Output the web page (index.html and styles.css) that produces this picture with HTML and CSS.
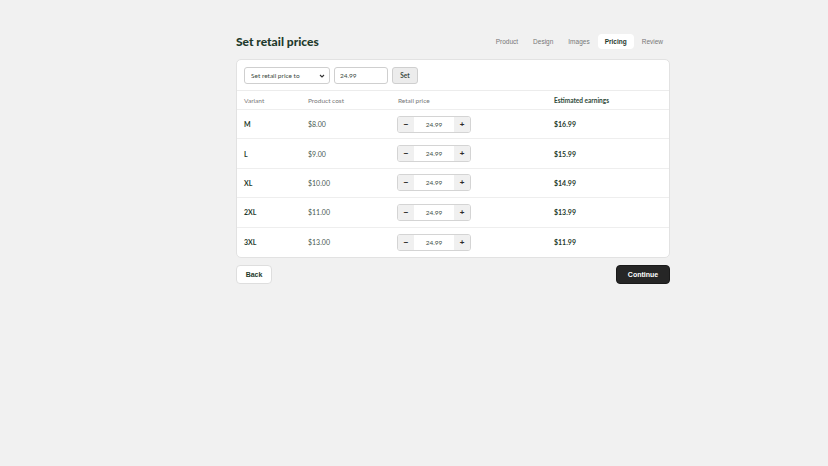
FILE: index.html
```html
<!DOCTYPE html>
<html lang="en">
<head>
  <meta charset="UTF-8">
  <title>Set retail prices</title>
  <link rel="stylesheet" href="styles.css">
</head>
<body>
  <main class="page">
    <header class="top">
      <h1>Set retail prices</h1>
      <nav class="steps">
        <span class="step">Product</span>
        <span class="step">Design</span>
        <span class="step">Images</span>
        <span class="step active">Pricing</span>
        <span class="step">Review</span>
      </nav>
    </header>

    <section class="card">
      <div class="toolbar">
        <div class="select-wrap">
          <select class="bulk">
            <option>Set retail price to</option>
          </select>
          <svg class="chevron" width="6" height="4" viewBox="0 0 6 4"><path d="M1 1l2 2 2-2" fill="none" stroke="#333" stroke-width="1.1"/></svg>
        </div>
        <input class="bulk-value" type="text" value="24.99">
        <button class="btn-set">Set</button>
      </div>

      <div class="row head">
        <div>Variant</div>
        <div>Product cost</div>
        <div>Retail price</div>
        <div>Estimated earnings</div>
      </div>

      <div class="row">
        <div class="variant">M</div>
        <div>$8.00</div>
        <div><div class="stepper"><button>&minus;</button><input type="text" value="24.99"><button>+</button></div></div>
        <div class="earn">$16.99</div>
      </div>
      <div class="row">
        <div class="variant">L</div>
        <div>$9.00</div>
        <div><div class="stepper"><button>&minus;</button><input type="text" value="24.99"><button>+</button></div></div>
        <div class="earn">$15.99</div>
      </div>
      <div class="row">
        <div class="variant">XL</div>
        <div>$10.00</div>
        <div><div class="stepper"><button>&minus;</button><input type="text" value="24.99"><button>+</button></div></div>
        <div class="earn">$14.99</div>
      </div>
      <div class="row">
        <div class="variant">2XL</div>
        <div>$11.00</div>
        <div><div class="stepper"><button>&minus;</button><input type="text" value="24.99"><button>+</button></div></div>
        <div class="earn">$13.99</div>
      </div>
      <div class="row">
        <div class="variant">3XL</div>
        <div>$13.00</div>
        <div><div class="stepper"><button>&minus;</button><input type="text" value="24.99"><button>+</button></div></div>
        <div class="earn">$11.99</div>
      </div>
    </section>

    <footer class="actions">
      <button class="btn-back">Back</button>
      <button class="btn-next">Continue</button>
    </footer>
  </main>
</body>
</html>
```

FILE: styles.css
```css
body {
  margin: 0;
  background: #f1f1f1;
  font-family: "Lato", "Liberation Sans", sans-serif;
  color: #1f3a2c;
}

.page {
  width: 434px;
  margin-left: 236px;
  padding-top: 34px;
}

.top {
  display: flex;
  justify-content: space-between;
  align-items: center;
  margin-bottom: 10px;
}

h1 {
  margin: 0;
  font-size: 12px;
  font-weight: 900;
  color: #1f3a2c;
}

.steps {
  display: flex;
  gap: 1px;
  font-family: "Liberation Sans", Arial, sans-serif;
  font-size: 6.5px;
  color: #777;
}

.step {
  padding: 4px 7px;
  border-radius: 4px;
}

.step.active {
  background: #fff;
  color: #1f3a2c;
  font-weight: bold;
}

.card {
  background: #fff;
  border: 1px solid #e2e2e2;
  border-radius: 5px;
}

.toolbar {
  display: flex;
  align-items: center;
  gap: 4px;
  height: 31px;
  box-sizing: border-box;
  padding: 0 7px;
  border-bottom: 1px solid #ececec;
}

.select-wrap {
  position: relative;
  display: flex;
}

.chevron {
  position: absolute;
  right: 5px;
  top: 7px;
  pointer-events: none;
}

.bulk, .bulk-value, .btn-set {
  display: block;
  height: 17px;
  box-sizing: border-box;
  font-family: "Lato", sans-serif;
  font-size: 6.5px;
  color: #3b4a40;
  border: 1px solid #cfcfcf;
  border-radius: 3px;
  background: #fff;
  margin: 0;
}

.bulk {
  appearance: none;
  width: 86px;
  padding: 0 6px;
}

.bulk-value {
  width: 54px;
  padding: 0 5px;
}

.btn-set {
  width: 26px;
  background: #ececec;
  font-weight: bold;
}

.row {
  display: grid;
  grid-template-columns: 64px 90px 156px 1fr;
  align-items: center;
  height: 29.4px;
  box-sizing: border-box;
  padding-left: 7px;
  border-bottom: 1px solid #eeeeee;
  font-size: 7px;
  color: #4a5a50;
}

.row:last-child {
  border-bottom: none;
}

.row.head {
  height: 19px;
  font-size: 6.5px;
  color: #777;
}

.row.head div:last-child {
  color: #2f4a3a;
  font-weight: bold;
}

.variant, .earn {
  font-weight: bold;
  color: #1f3a2c;
}

.stepper {
  display: flex;
  width: 74px;
  height: 17px;
  margin-left: -1px;
  border: 1px solid #d4d4d4;
  border-radius: 3px;
  box-sizing: border-box;
  overflow: hidden;
}

.stepper button {
  width: 16px;
  padding: 0;
  border: none;
  background: #f0f0f0;
  font-size: 8px;
  font-weight: bold;
  color: #2a2a2a;
}

.stepper input {
  width: 40px;
  border: none;
  text-align: center;
  font-family: "Lato", sans-serif;
  font-size: 6.5px;
  color: #3f5146;
  padding: 0;
}

.actions {
  display: flex;
  justify-content: space-between;
  margin-top: 7px;
}

.btn-back, .btn-next {
  height: 19px;
  border-radius: 4px;
  font-family: "Liberation Sans", Arial, sans-serif;
  font-size: 7px;
  font-weight: bold;
}

.btn-back {
  width: 36px;
  background: #fff;
  border: 1px solid #dedede;
  color: #1f3a2c;
}

.btn-next {
  width: 54px;
  background: #262626;
  border: 1px solid #1a1a1a;
  color: #fff;
}
```
